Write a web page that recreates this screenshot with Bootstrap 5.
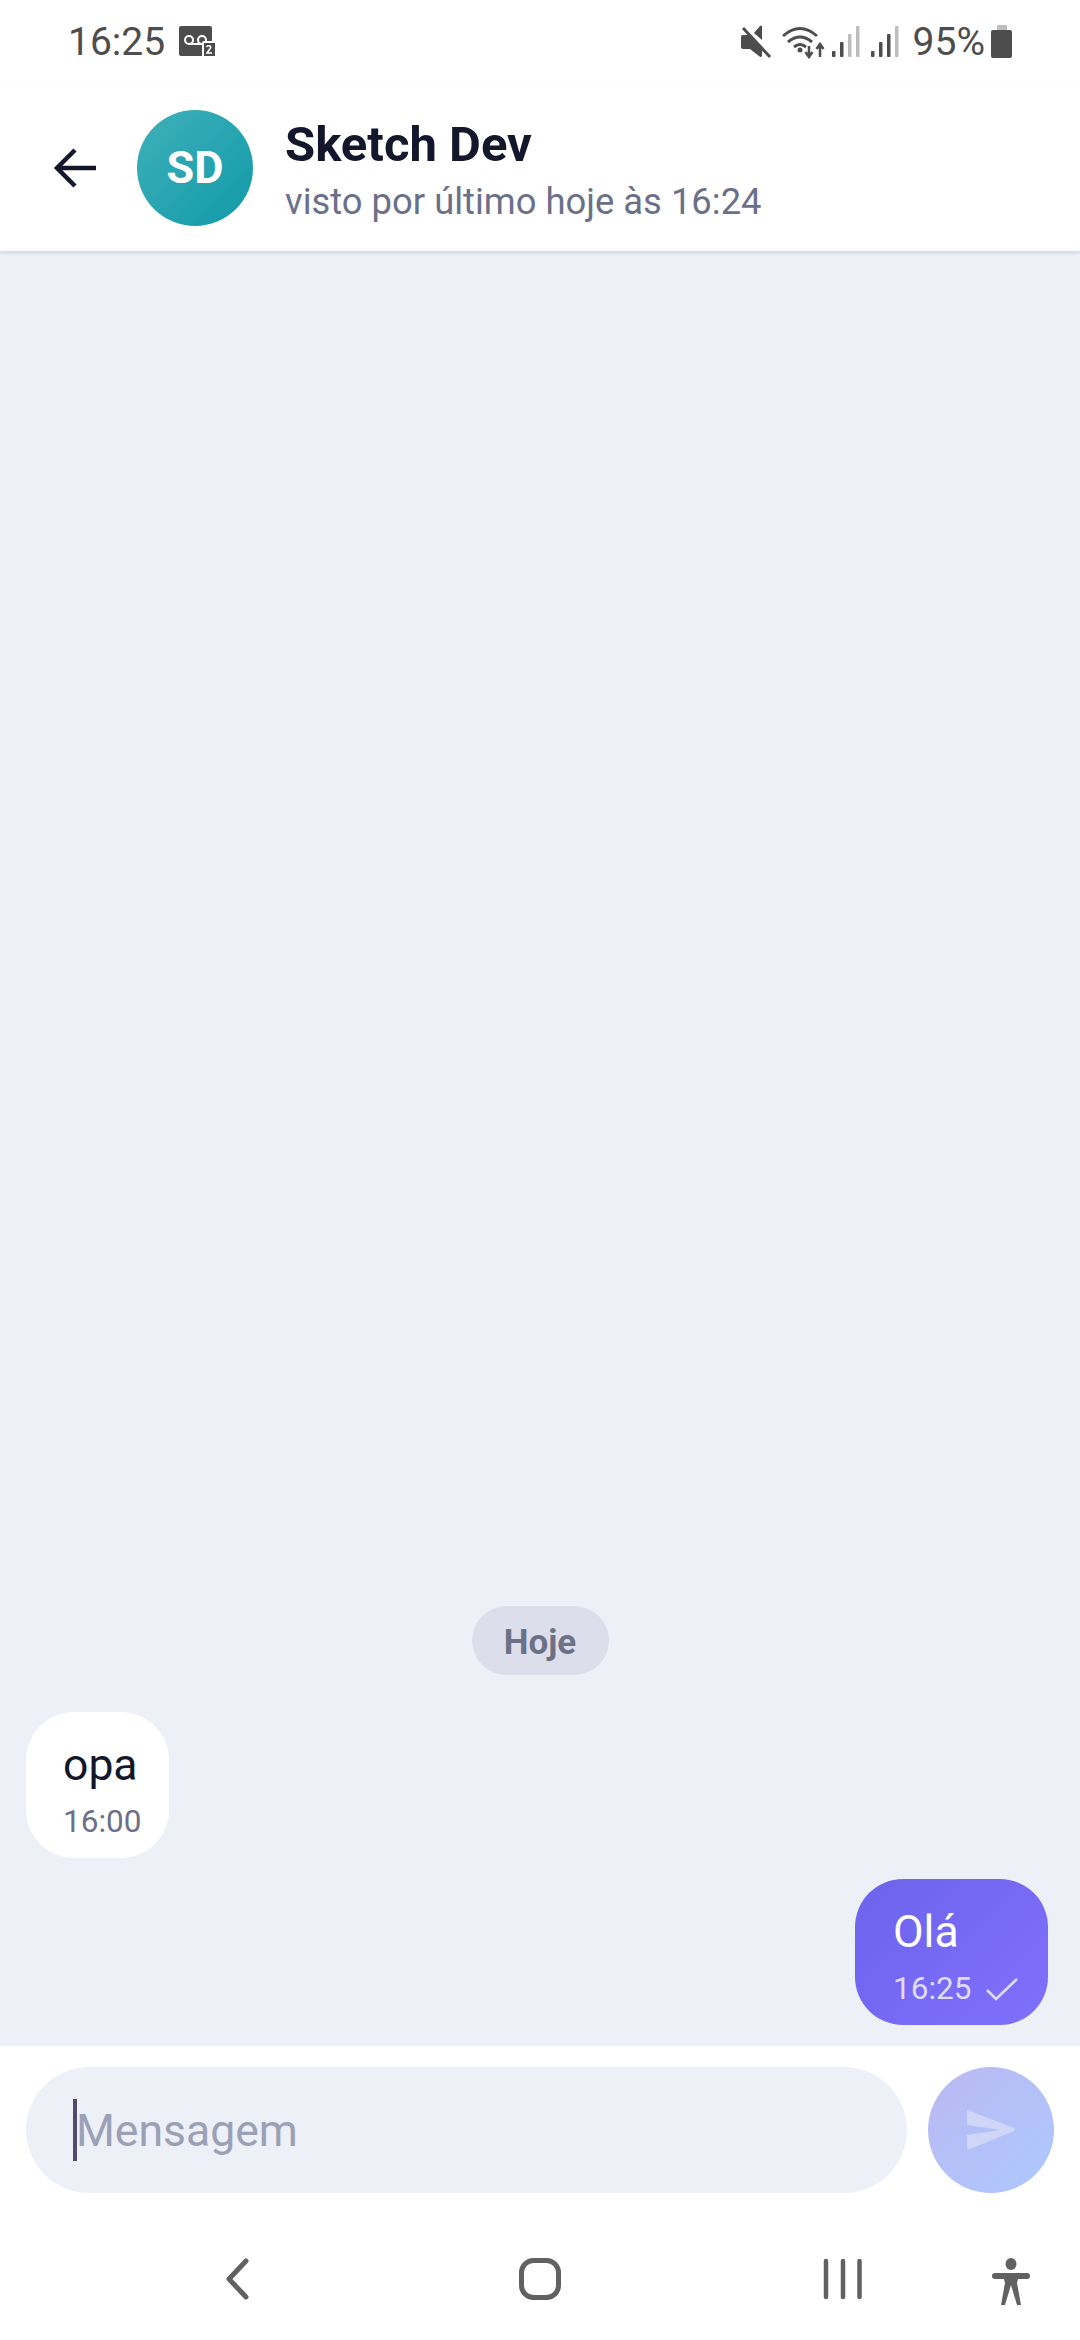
<!DOCTYPE html>
<html lang="pt">
<head>
  <meta charset="UTF-8" />
  <title>Sketch Dev</title>
  <link href="https://cdn.jsdelivr.net/npm/bootstrap@5.3.0/dist/css/bootstrap.min.css" rel="stylesheet" />
  <style>
    html, body { height: 2340px; }
    body { font-family: Roboto, "Liberation Sans", sans-serif; background: #fff; color: #14172b; overflow: hidden; }
    .status-bar { height: 84px; padding: 0 67px 0 68px; color: #4d4d4d; font-size: 39px; }
    .ic-vm { margin-left: 14px; }
    .ic-wifi { margin-left: 9px; }
    .ic-sig1 { margin-left: 5px; }
    .ic-sig2 { margin-left: 9px; }
    .batt-pct { margin-left: 13px; }
    .ic-batt { margin-left: 6px; }
    .chat-header { height: 167px; padding: 0 0 0 53px; box-shadow: 0 2px 4px rgba(30,40,80,.14); z-index: 2; }
    .avatar { width: 116px; height: 116px; margin-left: 40px; margin-right: 32px; background: linear-gradient(135deg, #3fb0ba, #119aa8); font-size: 45px; font-weight: 700; }
    .chat-title { font-size: 49px; font-weight: 700; line-height: 58px; margin-top: 4px; }
    .chat-sub { font-size: 36.4px; line-height: 44px; margin-top: 6px; color: #6b7089; }
    .chat-body { background: #edf0f7; padding: 0 26px 21px 26px; }
    .day-pill { width: 137px; height: 69px; background: #dcdfeb; color: #6b7186; font-size: 35px; font-weight: 700; margin-bottom: 37px; padding-top: 6px; }
    .bubble { height: 146px; border-radius: 48px; padding: 28px 25px 0 38px; }
    .bubble-in { background: #fff; width: 143px; margin-bottom: 21px; padding-left: 37px; }
    .bubble-out { background: linear-gradient(135deg, #6c63eb, #8070fd); color: #fff; width: 193px; margin-right: 6px; }
    .bubble-text { font-size: 44.5px; line-height: 50px; }
    .bubble-time { font-size: 31.5px; line-height: 36px; margin-top: 14px; color: #6b7089; white-space: nowrap; }
    .bubble-out .bubble-time { color: #dfdcfb; gap: 15px; }
    .composer { height: 174px; padding: 21px 26px 0 26px; gap: 21px; }
    .msg-input { height: 126px; background: #edf0f7; padding-left: 47px; font-size: 44.5px; color: #9aa1b6; }
    .msg-placeholder { margin-left: -2px; padding-top: 2px; }
    .caret { width: 4px; height: 62px; background: #52496b; margin-right: 1px; }
    .send-btn { width: 126px; height: 126px; background: linear-gradient(135deg, #bcb8f2, #acc9ff); }
    .nav-bar { height: 120px; }
  </style>
</head>
<body class="d-flex flex-column">

  <div class="status-bar d-flex align-items-center justify-content-between">
    <div class="d-flex align-items-center">
      <span>16:25</span>
      <svg class="ic-vm" width="38" height="32" viewBox="0 0 38 32">
        <rect x="0" y="0" width="33" height="30" rx="2" fill="#4d4d4d"/>
        <circle cx="10" cy="14" r="4" fill="none" stroke="#fff" stroke-width="2"/>
        <circle cx="23" cy="14" r="4" fill="none" stroke="#fff" stroke-width="2"/>
        <path d="M10 18h13" stroke="#fff" stroke-width="2"/>
        <rect x="24" y="16" width="13" height="15" rx="1" fill="#4d4d4d" stroke="#fff" stroke-width="2"/>
        <path d="M27.500 21c1-2 5-1.500 4 1l-3.500 5h5" fill="none" stroke="#fff" stroke-width="1.600"/>
      </svg>
    </div>
    <div class="d-flex align-items-center">
      <svg width="32" height="34" viewBox="0 0 32 34">
        <path d="M0 12q0-2 2-2h5l14 14v7q-1 2-3 0l-9-7H2q-2 0-2-2zM21 1v14L13 8l6-7q2-1 2 0z" fill="#4d4d4d"/>
        <path d="M2 3l27 29" stroke="#4d4d4d" stroke-width="3"/>
      </svg>
      <svg class="ic-wifi" width="44" height="34" viewBox="0 0 44 34">
        <path d="M1 11q17-15 34 0M6 17q12-10 24 0M12 22q6-5 12 0" fill="none" stroke="#4d4d4d" stroke-width="3"/>
        <circle cx="18" cy="25" r="2.500" fill="#4d4d4d"/>
        <path d="M27 21v10M23.500 27l3.500 5 3.500-5" fill="none" stroke="#4d4d4d" stroke-width="2.500"/>
        <path d="M38 32V20M34.500 24l3.500-5 3.500 5" fill="none" stroke="#4d4d4d" stroke-width="2.500"/>
      </svg>
      <svg class="ic-sig1" width="30" height="32" viewBox="0 0 30 32">
        <rect x="1" y="25" width="3.500" height="6" rx="1" fill="#4d4d4d"/>
        <rect x="9" y="16" width="3.500" height="15" rx="1" fill="#4d4d4d"/>
        <rect x="17" y="8" width="3.500" height="23" rx="1" fill="#bdbdbd"/>
        <rect x="25" y="0" width="3.500" height="31" rx="1" fill="#bdbdbd"/>
      </svg>
      <svg class="ic-sig2" width="30" height="32" viewBox="0 0 30 32">
        <rect x="1" y="25" width="3.500" height="6" rx="1" fill="#4d4d4d"/>
        <rect x="9" y="16" width="3.500" height="15" rx="1" fill="#4d4d4d"/>
        <rect x="17" y="8" width="3.500" height="23" rx="1" fill="#4d4d4d"/>
        <rect x="25" y="0" width="3.500" height="31" rx="1" fill="#bdbdbd"/>
      </svg>
      <span class="batt-pct">95%</span>
      <svg class="ic-batt" width="22" height="34" viewBox="0 0 22 34">
        <rect x="6" y="0" width="10" height="5" rx="1" fill="#bdbdbd"/>
        <rect x="0" y="5" width="21" height="28" rx="2" fill="#4d4d4d"/>
      </svg>
    </div>
  </div>

  <div class="chat-header d-flex align-items-center bg-white">
    <svg width="44" height="42" viewBox="0 0 44 42">
      <path d="M43 21H4M22 3L4 21l18 18" fill="none" stroke="#14172b" stroke-width="4.500"/>
    </svg>
    <div class="avatar rounded-circle d-flex align-items-center justify-content-center text-white">SD</div>
    <div>
      <div class="chat-title">Sketch Dev</div>
      <div class="chat-sub">visto por último hoje às 16:24</div>
    </div>
  </div>

  <div class="chat-body flex-grow-1 d-flex flex-column justify-content-end">
    <div class="day-pill rounded-pill align-self-center d-flex align-items-center justify-content-center">Hoje</div>
    <div class="bubble bubble-in align-self-start">
      <div class="bubble-text">opa</div>
      <div class="bubble-time">16:00</div>
    </div>
    <div class="bubble bubble-out align-self-end">
      <div class="bubble-text">Olá</div>
      <div class="bubble-time d-flex align-items-center">
        <span>16:25</span>
        <svg width="32" height="24" viewBox="0 0 32 24"><path d="M1 13l9 9L31 2" fill="none" stroke="#dfdcfb" stroke-width="2.500"/></svg>
      </div>
    </div>
  </div>

  <div class="composer d-flex bg-white">
    <div class="msg-input flex-grow-1 rounded-pill d-flex align-items-center">
      <span class="caret"></span><span class="msg-placeholder">Mensagem</span>
    </div>
    <div class="send-btn rounded-circle d-flex align-items-center justify-content-center flex-shrink-0">
      <svg width="50" height="42" viewBox="0 0 50 42">
        <path d="M1 3q0-3 3-1l44 17q2 2 0 3L4 40q-3 1-3-2v-12l34-5L1 16z" fill="#d0d6f8"/>
      </svg>
    </div>
  </div>

  <div class="nav-bar bg-white">
    <svg width="1080" height="120" viewBox="0 0 1080 120">
      <path d="M246 41L229 59l17 18" fill="none" stroke="#616161" stroke-width="5" stroke-linecap="round" stroke-linejoin="round"/>
      <rect x="521.500" y="40.500" width="37" height="37" rx="12" fill="none" stroke="#616161" stroke-width="5"/>
      <path d="M826 41v36M843 41v36M859.500 41v36" stroke="#616161" stroke-width="4.500" stroke-linecap="round"/>
      <ellipse cx="1011" cy="44" rx="5.500" ry="6" fill="#616161"/>
      <path d="M995 53h32q3 0 3 3t-3 3h-9l-1 4 4 22h-4l-6-20-6 20h-4l4-22-1-4h-9q-3 0-3-3t3-3z" fill="#616161"/>
    </svg>
  </div>

</body>
</html>
